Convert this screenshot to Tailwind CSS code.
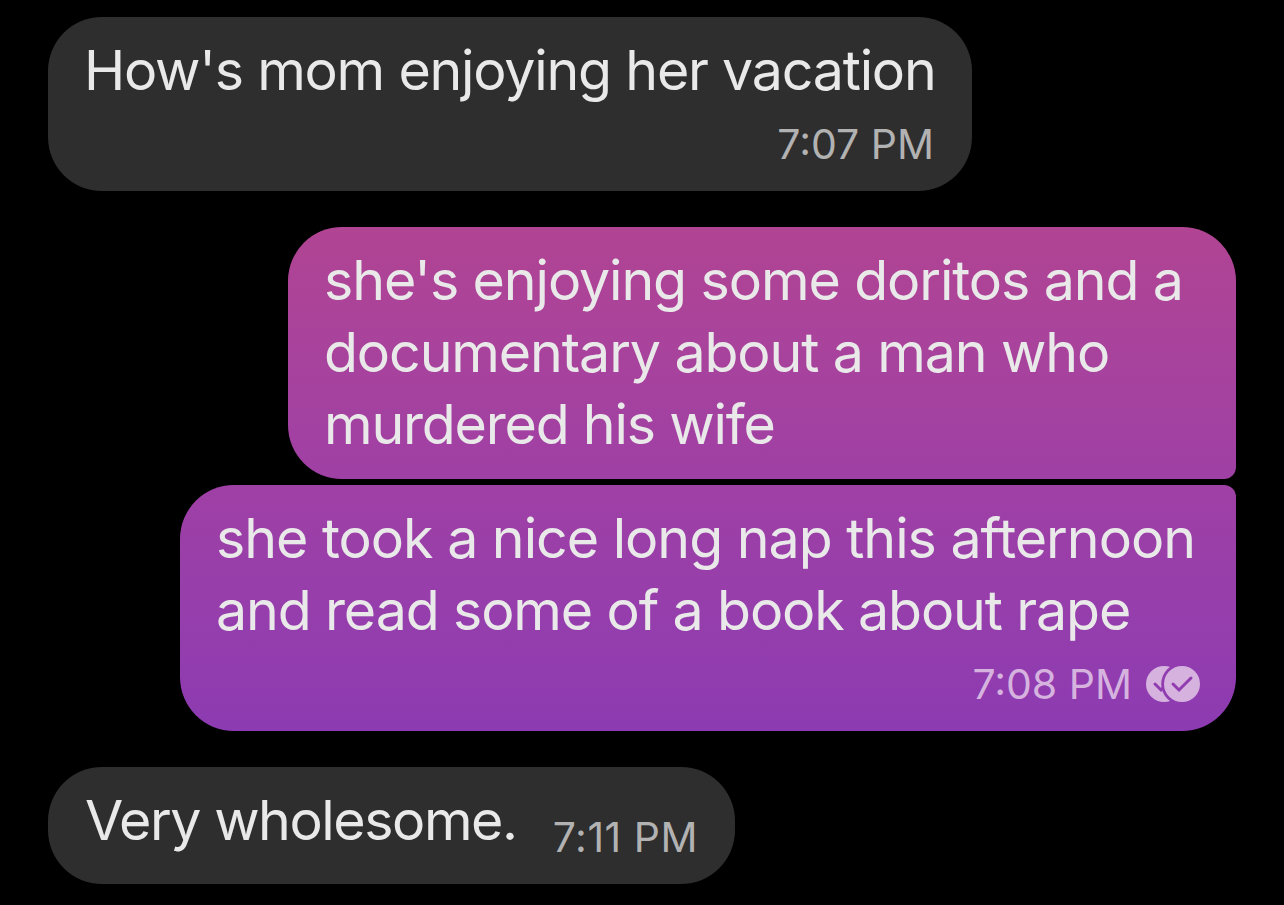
<!DOCTYPE html>
<html lang="en"><head><meta charset="utf-8"><title>Messages</title>
<script src="https://cdn.jsdelivr.net/npm/@tailwindcss/browser@4"></script></head>
<body class="bg-black font-['Inter',sans-serif] text-[#e9e9e9]">
<main class="flex h-[905px] w-[1284px] flex-col overflow-hidden px-12 pt-[17px] text-[55.5px] leading-[72px]">
<section class="h-[174px] w-[924px] rounded-[54px] bg-[#2e2e2e] pl-[36px] pt-[17px]">
<p class="whitespace-nowrap"><span class="tracking-[-1.22px]">How's mom enjoying her vacation</span></p>
<time class="mt-[13px] block pr-[38px] text-right text-[41px] leading-[50px] text-[#b2b2b2]"><span>7:07 PM</span></time>
</section>
<section class="mt-9 h-[252px] w-[948px] self-end rounded-l-[54px] rounded-tr-[54px] rounded-br-[12px] bg-linear-to-b from-[#b14493] to-[#9f40a5] pl-[36px] pt-[17px]">
<p class="whitespace-nowrap"><span class="tracking-[-1.1px]">she's enjoying some doritos and a</span><br><span class="tracking-[-1.11px]">documentary about a man who</span><br><span class="tracking-[-1.2px]">murdered his wife</span></p>
</section>
<section class="mt-[6px] h-[246px] w-[1056px] self-end rounded-l-[54px] rounded-tr-[12px] rounded-br-[54px] bg-linear-to-b from-[#9f40a5] to-[#8d3bb2] pl-[36px] pt-[17px]">
<p class="whitespace-nowrap"><span class="tracking-[-1.02px]">she took a nice long nap this afternoon</span><br><span class="tracking-[-1.13px]">and read some of a book about rape</span></p>
<div class="mt-[13px] flex items-center justify-end gap-[14px] pr-9 text-[41px] leading-[50px] text-[#d6b3df]"><time>7:08 PM</time>
<svg class="h-9 w-[54px]" viewBox="0 0 54 36" fill="none">
<mask id="sent"><rect width="54" height="36" fill="white"/><path d="M9 18l6 6 12-12" stroke="black" stroke-width="3" stroke-linecap="round" stroke-linejoin="miter"/><circle cx="36" cy="18" r="20.8" fill="black"/></mask>
<mask id="read"><rect width="54" height="36" fill="white"/><path d="M27 18l6 6 12-12" stroke="black" stroke-width="3" stroke-linecap="round" stroke-linejoin="miter"/></mask>
<circle cx="18" cy="18" r="18" fill="currentColor" mask="url(#sent)"/>
<circle cx="36" cy="18" r="18" fill="currentColor" mask="url(#read)"/></svg></div>
</section>
<section class="mt-9 flex h-[117px] w-[687px] justify-between rounded-[54px] bg-[#2e2e2e] pl-[37px] pr-[37px] pt-[17px]">
<p class="whitespace-nowrap"><span class="tracking-[-1.45px]">Very wholesome.</span></p><time class="mt-[28px] whitespace-nowrap text-[41px] leading-[50px] tracking-[0.5px] text-[#b2b2b2]">7:11 PM</time>
</section>
</main></body></html>
